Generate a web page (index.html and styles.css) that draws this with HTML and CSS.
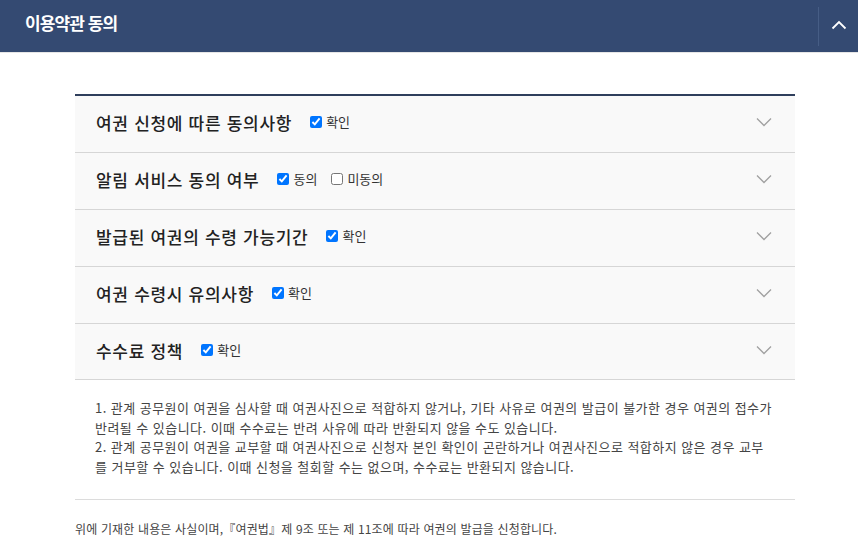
FILE: index.html
```html
<!DOCTYPE html>
<html lang="ko">
<head>
<meta charset="utf-8">
<title>이용약관 동의</title>
<link rel="stylesheet" href="styles.css">
</head>
<body>
<header class="topbar">
  <h1 class="topbar-title">이용약관 동의</h1>
  <button class="topbar-toggle" aria-label="접기">
    <svg width="16" height="10" viewBox="0 0 16 10"><path d="M1.5 8.5 L8 2 L14.5 8.5" fill="none" stroke="#fff" stroke-width="1.8"/></svg>
  </button>
</header>
<main class="content">
  <ul class="terms">
    <li class="term">
      <span class="term-title">여권 신청에 따른 동의사항</span>
      <label class="check"><input type="checkbox" checked>확인</label>
      <svg class="chev" width="16" height="10" viewBox="0 0 16 10"><path d="M1 1.5 L8 8.5 L15 1.5" fill="none" stroke="#a0a0a0" stroke-width="1.3"/></svg>
    </li>
    <li class="term">
      <span class="term-title">알림 서비스 동의 여부</span>
      <label class="check"><input type="checkbox" checked>동의</label>
      <label class="check check-next"><input type="checkbox">미동의</label>
      <svg class="chev" width="16" height="10" viewBox="0 0 16 10"><path d="M1 1.5 L8 8.5 L15 1.5" fill="none" stroke="#a0a0a0" stroke-width="1.3"/></svg>
    </li>
    <li class="term">
      <span class="term-title">발급된 여권의 수령 가능기간</span>
      <label class="check"><input type="checkbox" checked>확인</label>
      <svg class="chev" width="16" height="10" viewBox="0 0 16 10"><path d="M1 1.5 L8 8.5 L15 1.5" fill="none" stroke="#a0a0a0" stroke-width="1.3"/></svg>
    </li>
    <li class="term">
      <span class="term-title">여권 수령시 유의사항</span>
      <label class="check"><input type="checkbox" checked>확인</label>
      <svg class="chev" width="16" height="10" viewBox="0 0 16 10"><path d="M1 1.5 L8 8.5 L15 1.5" fill="none" stroke="#a0a0a0" stroke-width="1.3"/></svg>
    </li>
    <li class="term">
      <span class="term-title">수수료 정책</span>
      <label class="check"><input type="checkbox" checked>확인</label>
      <svg class="chev" width="16" height="10" viewBox="0 0 16 10"><path d="M1 1.5 L8 8.5 L15 1.5" fill="none" stroke="#a0a0a0" stroke-width="1.3"/></svg>
    </li>
  </ul>
  <div class="notes">
    <p>1. 관계 공무원이 여권을 심사할 때 여권사진으로 적합하지 않거나, 기타 사유로 여권의 발급이 불가한 경우 여권의 접수가 반려될 수 있습니다. 이때 수수료는 반려 사유에 따라 반환되지 않을 수도 있습니다.</p>
    <p>2. 관계 공무원이 여권을 교부할 때 여권사진으로 신청자 본인 확인이 곤란하거나 여권사진으로 적합하지 않은 경우 교부를 거부할 수 있습니다. 이때 신청을 철회할 수는 없으며, 수수료는 반환되지 않습니다.</p>
  </div>
  <p class="declare">위에 기재한 내용은 사실이며,『여권법』제 9조 또는 제 11조에 따라 여권의 발급을 신청합니다.</p>
</main>
</body>
</html>
```
FILE: styles.css
```css
* { box-sizing: border-box; }
html, body { margin: 0; padding: 0; background: #fff; }
body {
  font-family: "Noto Sans CJK KR", "Noto Sans", "Liberation Sans", sans-serif;
  color: #222;
}
.topbar {
  height: 53px;
  background: #344a72;
  display: flex;
  align-items: center;
  border-bottom: 1px solid #e6e6e6;
}
.topbar-title {
  margin: 0 0 0 25px;
  flex: 1;
  font-size: 17px;
  font-weight: 700;
  color: #fff;
  letter-spacing: -0.9px;
  line-height: 20px;
  padding-bottom: 6px;
}
.topbar-toggle {
  width: 40px;
  height: 39px;
  padding: 0 0 2px 0;
  background: transparent;
  border: 0;
  border-left: 1px solid #465d85;
  display: flex;
  align-items: center;
  justify-content: center;
}
.content {
  width: 720px;
  margin: 41px 0 0 75px;
}
.terms {
  list-style: none;
  margin: 0;
  padding: 0;
  border-top: 2px solid #2f3f5c;
}
.term {
  height: 57px;
  display: flex;
  align-items: center;
  padding: 0 23px 0 21px;
  background: #f9f9f9;
  border-bottom: 1px solid #d6d6d6;
}
.term:last-child { height: 56px; }
.term-title {
  font-size: 17px;
  font-weight: 500;
  color: #222;
  line-height: 20px;
  margin-right: 18px;
  letter-spacing: 0.7px;
  padding-bottom: 2px;
}
.check {
  display: flex;
  align-items: center;
  font-size: 13px;
  color: #333;
  line-height: 16px;
  margin-bottom: 4px;
}
.check input {
  width: 12px;
  height: 12px;
  margin: 0 4px 0 0;
}
.check-next { margin-left: 14px; }
.chev { margin-left: auto; margin-bottom: 4px; }
.notes {
  padding: 18px 20px 23px 20px;
  border-bottom: 1px solid #dcdcdc;
  font-size: 13px;
  line-height: 19.5px;
  color: #444;
  letter-spacing: 0.45px;
}
.notes p { margin: 0; }
.declare {
  margin: 20px 0 0 0;
  font-size: 12px;
  line-height: 18px;
  color: #444;
  letter-spacing: 0.15px;
}
```
